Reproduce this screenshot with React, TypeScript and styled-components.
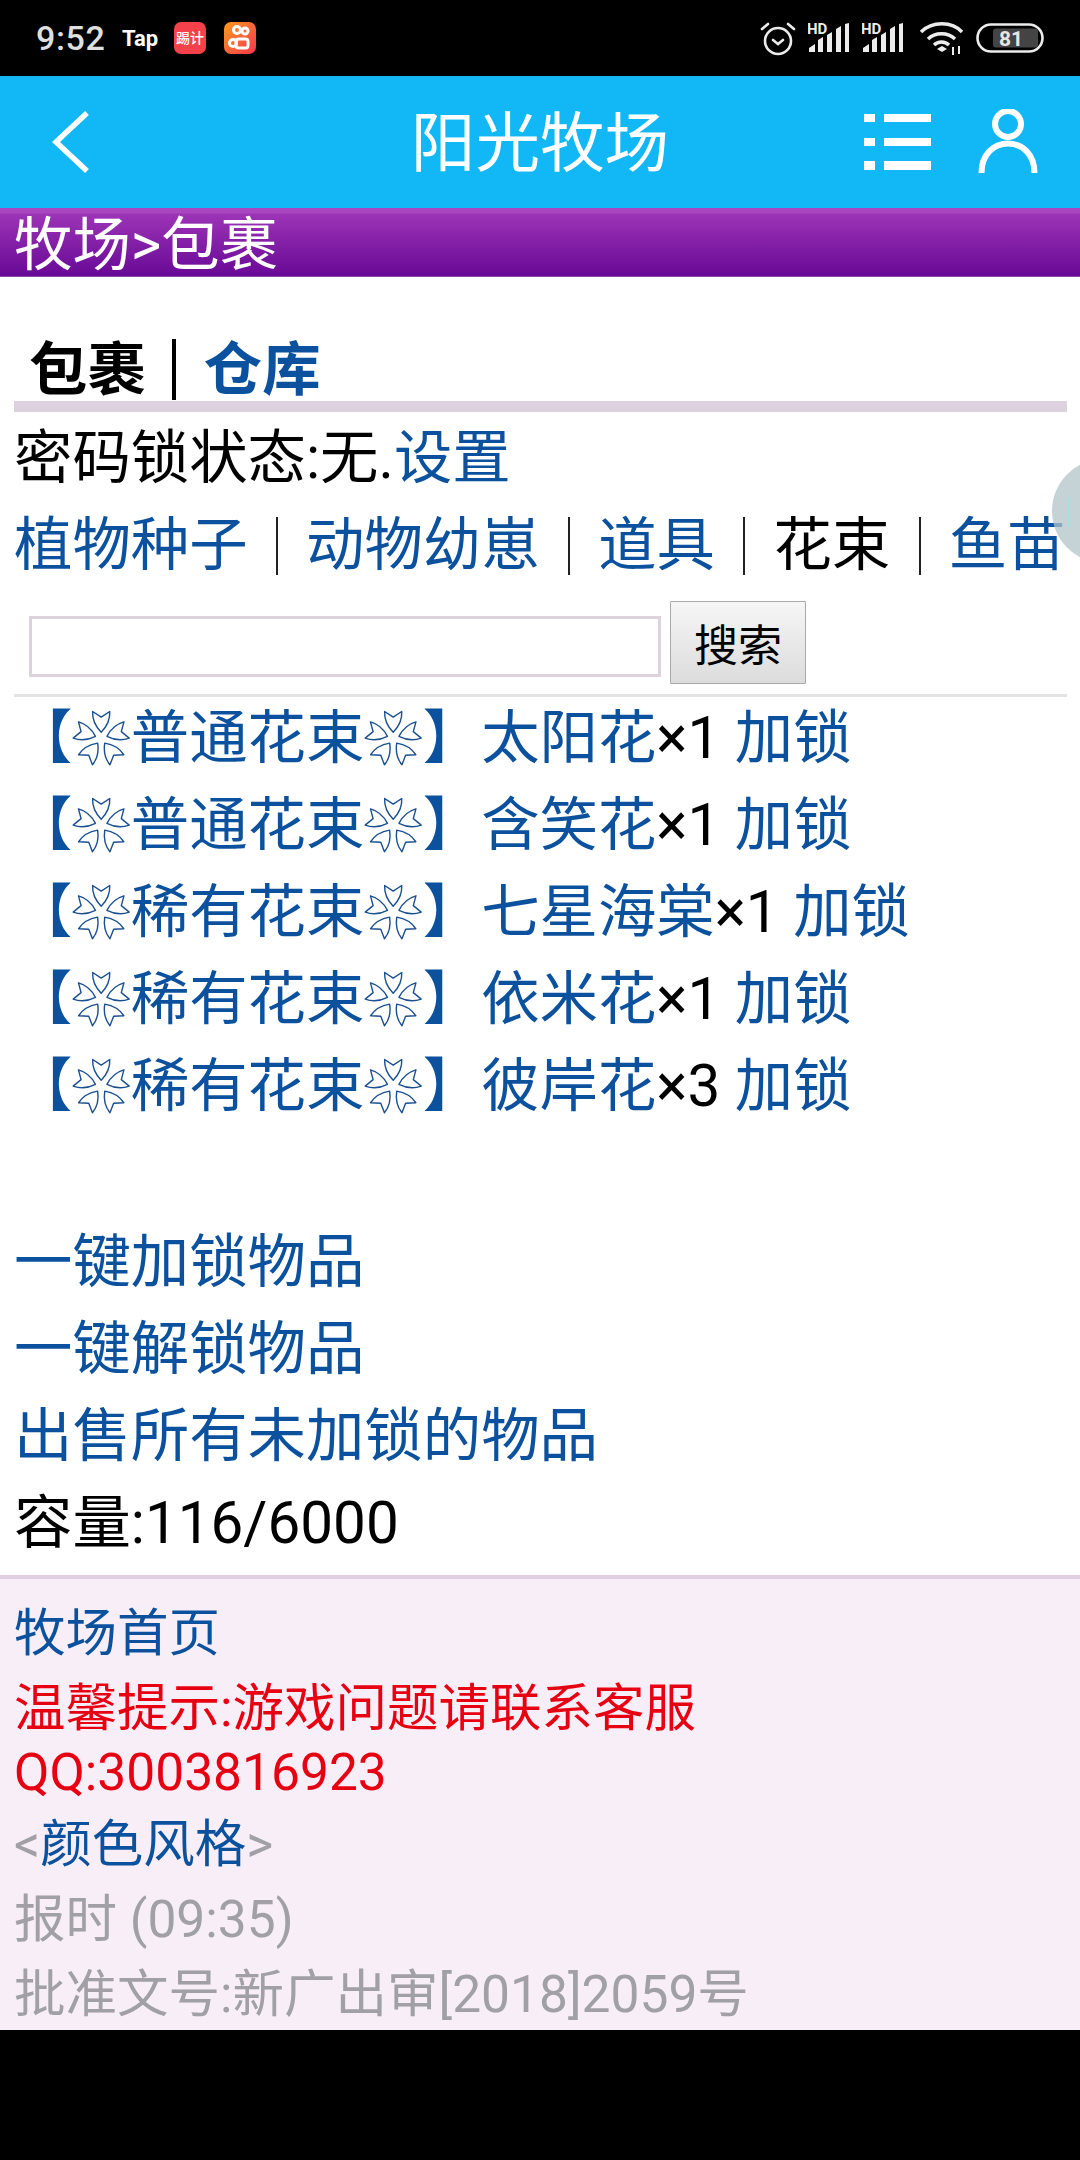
import React from "react";
import styled, { createGlobalStyle } from "styled-components";

const Global = createGlobalStyle`
  html, body { margin: 0; padding: 0; background: #000; }
  body { font-family: Roboto, "Noto Sans CJK SC", sans-serif; }
  * { box-sizing: border-box; }
`;

const LINK = "#0B519E";

const Page = styled.div`
  position: relative;
  width: 1080px;
  height: 2160px;
  overflow: hidden;
  background: #000;
`;

const StatusBar = styled.div`
  height: 76px;
  background: #000;
  display: flex;
  align-items: center;
  padding: 0 36px 0 36px;
`;

const Clock = styled.span`
  font-size: 34px;
  font-weight: 500;
  color: #dfdfdf;
  letter-spacing: 0.6px;
  width: 86px;
`;

const TapMark = styled.span`
  font-size: 22px;
  font-weight: 700;
  color: #fff;
  width: 52px;
`;

const AppIcon = styled.div`
  width: 32px;
  height: 32px;
  border-radius: 7px;
  background: ${(p) => p.$bg};
  margin-right: 18px;
  display: flex;
  align-items: center;
  justify-content: center;
  color: #fff;
  font-size: 14px;
  font-weight: 500;
  line-height: 1;
  overflow: hidden;
`;

const StatusRight = styled.div`
  margin-left: auto;
  display: flex;
  align-items: center;
  gap: 12px;
`;

const WifiIcon = styled.svg`
  margin-left: 4px;
`;

const Header = styled.header`
  height: 132px;
  background: #12b7f5;
  display: grid;
  grid-template-columns: 1fr auto 1fr;
  align-items: center;
  padding: 0 42px;
`;

const BackIcon = styled.svg`
  margin-left: 10px;
`;

const HeaderTitle = styled.h1`
  margin: 0;
  font-size: 64.6px;
  font-weight: 400;
  line-height: 136px;
  height: 132px;
  color: #fff;
`;

const HeaderActions = styled.div`
  display: flex;
  justify-content: flex-end;
  align-items: center;
  gap: 47px;
`;

const Crumb = styled.div`
  height: 69px;
  padding: 6px 0 0 14px;
  color: #fff;
  font-size: 58.4px;
  line-height: 63px;
  background: linear-gradient(#a847bf 0, #a847bf 5px, #9c34b6 6px, #680996 100%);
  border-bottom: 1px solid #8a4aa8;
`;

const Main = styled.main`
  background: #fff;
  height: 1298px;
  padding-top: 49px;
  font-size: 58.4px;
  line-height: 87px;
  color: #000;
`;

const Tabs = styled.div`
  margin: 0 13px 0 14px;
  height: 86px;
  border-bottom: 11px solid #ddd0df;
  display: flex;
  align-items: flex-start;
  padding-left: 15px;
  font-weight: 700;
  line-height: 89px;
`;

const TabBar = styled.i`
  display: block;
  width: 4px;
  height: 61px;
  margin: 13px 28px 0 26px;
  background: #000;
`;

const Line = styled.div`
  padding-left: 14px;
  white-space: nowrap;
`;

const StatusLine = styled(Line)`
  padding-top: 3px;
`;

const A = styled.span`
  color: ${LINK};
`;

const Cats = styled.div`
  display: flex;
  align-items: center;
  padding-left: 14px;
  height: 87px;
  white-space: nowrap;
`;

const CatBar = styled.i`
  display: block;
  width: 2px;
  height: 58px;
  margin: 0 28px 0 28.5px;
  background: #222;
`;

const SearchRow = styled.div`
  display: flex;
  align-items: flex-start;
  height: 105px;
  padding: 12px 0 0 29px;
  gap: 9px;
`;

const SearchInput = styled.input`
  width: 632px;
  height: 61px;
  margin-top: 15px;
  border: 3px solid #dcd3dd;
  background: #fff;
  outline: none;
  padding: 0;
`;

const SearchButton = styled.button`
  width: 136px;
  height: 83px;
  border: 1px solid #a9a9a9;
  border-radius: 1px;
  background: linear-gradient(#f6f6f6, #dcdcdc);
  font-family: Roboto, "Noto Sans CJK SC", sans-serif;
  font-size: 44px;
  color: #000;
  padding: 0;
`;

const Divider = styled.div`
  height: 3px;
  margin: 0 13px 0 14px;
  background: #e4e4e4;
`;

const Items = styled.div`
  margin-top: -2px;
  margin-bottom: 89px;
`;

const FlowerSvg = styled.svg`
  display: inline-block;
  width: 58.4px;
  height: 58.4px;
  vertical-align: -8px;
`;

const Footer = styled.footer`
  background: #f8eef8;
  border-top: 4px solid #e0cfe0;
  height: 455px;
  padding: 23px 0 0 14px;
  font-size: 51.5px;
  line-height: 64px;
  color: #a0a0a6;
`;

const FootRow = styled.div`
  margin-bottom: 11px;
  white-space: nowrap;
`;

const Red = styled.div`
  color: #e60012;
  margin-bottom: 8px;
`;

const Bubble = styled.div`
  position: absolute;
  left: 1052px;
  top: 459px;
  width: 104px;
  height: 104px;
  border-radius: 50%;
  background: rgba(178, 196, 200, 0.75);
  &::after {
    content: "";
    position: absolute;
    left: 15px;
    top: 38px;
    width: 2px;
    height: 30px;
    background: #a8e0e2;
  }
`;

const PETAL = "M0 -6C-4 -10 -9 -17 -8.5 -26.5L0 -21L8.5 -26.5C9 -17 4 -10 0 -6Z";

const Flower = () => (
  <FlowerSvg viewBox="0 0 58 58" role="img" aria-label="flower">
    <g transform="translate(29 30)" fill="none" stroke="#1A4F90" strokeWidth="1.4" strokeLinejoin="round">
      {[0, 72, 144, 216, 288].map((r) => (
        <path key={r} d={PETAL} transform={`rotate(${r})`} />
      ))}
    </g>
  </FlowerSvg>
);

const Item = ({ kind, name, n }: { kind: string; name: string; n: number }) => (
  <Line>
    <A>
      【<Flower />
      {kind}
      <Flower />】{name}
    </A>
    ×{n} <A>加锁</A>
  </Line>
);

const Signal = () => (
  <svg width="42" height="34" viewBox="0 0 42 34" fill="#ececec">
    <text x="-1" y="13" fontSize="15" fontWeight="700" fontFamily="Roboto, sans-serif">HD</text>
    <path d="M1 31v-4l6-4v8zM10 31V19l5-3v15zM19 31V14l5-3v20zM28 31V8l5-3v26zM37 31V3l4-1v29z" />
  </svg>
);

const Kuaishou = () => (
  <svg width="24" height="26" viewBox="0 0 24 26" fill="none" stroke="#fff" strokeWidth="3">
    <circle cx="9" cy="5" r="3.5" />
    <circle cx="17" cy="6" r="3" />
    <rect x="8" y="14" width="12" height="9" rx="2.5" />
    <circle cx="5" cy="18" r="3.5" />
  </svg>
);

export default function App() {
  return (
    <Page>
      <Global />
      <StatusBar>
        <Clock>9:52</Clock>
        <TapMark>Tap</TapMark>
        <AppIcon $bg="#f5414a">踢计</AppIcon>
        <AppIcon $bg="linear-gradient(135deg,#ff9a1e,#f5364f)">
          <Kuaishou />
        </AppIcon>
        <StatusRight>
          <svg width="36" height="36" viewBox="0 0 36 36" fill="none" stroke="#ececec" strokeWidth="2.6" strokeLinecap="round">
            <circle cx="18" cy="21" r="13" />
            <path d="M2 9l6-5M34 9l-6-5M13 20l5 4 5-4" />
          </svg>
          <Signal />
          <Signal />
          <WifiIcon width="44" height="36" viewBox="0 0 44 36" fill="none" stroke="#ececec" strokeWidth="3.4">
            <path d="M1 12C12 1 32 1 42 12M8 19C15 12 28 12 35 19M14 25C18 21 25 21 29 25" />
            <path d="M17 29l5-3 5 3-5 3z" fill="#ececec" stroke="none" />
            <path d="M33 27v8M39 26v8" strokeWidth="2" />
          </WifiIcon>
          <svg width="68" height="30" viewBox="0 0 68 30">
            <rect x="1.5" y="1.5" width="65" height="27" rx="13.5" fill="none" stroke="#ececec" strokeWidth="2.6" />
            <rect x="17" y="5.5" width="45" height="19" rx="3" fill="#444" />
            <text x="35" y="22.5" textAnchor="middle" fontSize="21" fontWeight="700" fill="#e6e6e6" fontFamily="Roboto, sans-serif">81</text>
          </svg>
        </StatusRight>
      </StatusBar>
      <Header>
        <BackIcon width="38" height="62" viewBox="0 0 38 62" fill="none" stroke="#fff" strokeWidth="5.5">
          <path d="M35 2L4 31l31 29" />
        </BackIcon>
        <HeaderTitle>阳光牧场</HeaderTitle>
        <HeaderActions>
          <svg width="67" height="56" viewBox="0 0 67 56" fill="#fff">
            <path d="M0 0h11v8H0zM20 0h47v8H20zM0 24h11v8H0zM20 24h47v8H20zM0 47h11v9H0zM20 47h47v9H20z" />
          </svg>
          <svg width="60" height="66" viewBox="0 0 60 66" fill="none" stroke="#fff" strokeWidth="6">
            <circle cx="30" cy="15" r="13" />
            <path d="M3.5 64C3.5 45 16 34.5 30 34.5C44 34.5 56.5 45 56.5 64" />
          </svg>
        </HeaderActions>
      </Header>
      <Crumb>牧场&gt;包裹</Crumb>
      <Main>
        <Tabs>
          包裹
          <TabBar />
          <A>仓库</A>
        </Tabs>
        <StatusLine>
          密码锁状态:无.<A>设置</A>
        </StatusLine>
        <Cats>
          <A>植物种子</A>
          <CatBar />
          <A>动物幼崽</A>
          <CatBar />
          <A>道具</A>
          <CatBar />
          花束
          <CatBar />
          <A>鱼苗</A>
        </Cats>
        <SearchRow>
          <SearchInput />
          <SearchButton>搜索</SearchButton>
        </SearchRow>
        <Divider />
        <Items>
          <Item kind="普通花束" name="太阳花" n={1} />
          <Item kind="普通花束" name="含笑花" n={1} />
          <Item kind="稀有花束" name="七星海棠" n={1} />
          <Item kind="稀有花束" name="依米花" n={1} />
          <Item kind="稀有花束" name="彼岸花" n={3} />
        </Items>
        <Line><A>一键加锁物品</A></Line>
        <Line><A>一键解锁物品</A></Line>
        <Line><A>出售所有未加锁的物品</A></Line>
        <Line>容量:116/6000</Line>
      </Main>
      <Footer>
        <FootRow><A>牧场首页</A></FootRow>
        <Red>
          温馨提示:游戏问题请联系客服
          <br />
          QQ:3003816923
        </Red>
        <FootRow>&lt;<A>颜色风格</A>&gt;</FootRow>
        <FootRow>报时 (09:35)</FootRow>
        <FootRow>批准文号:新广出审[2018]2059号</FootRow>
      </Footer>
      <Bubble />
    </Page>
  );
}
